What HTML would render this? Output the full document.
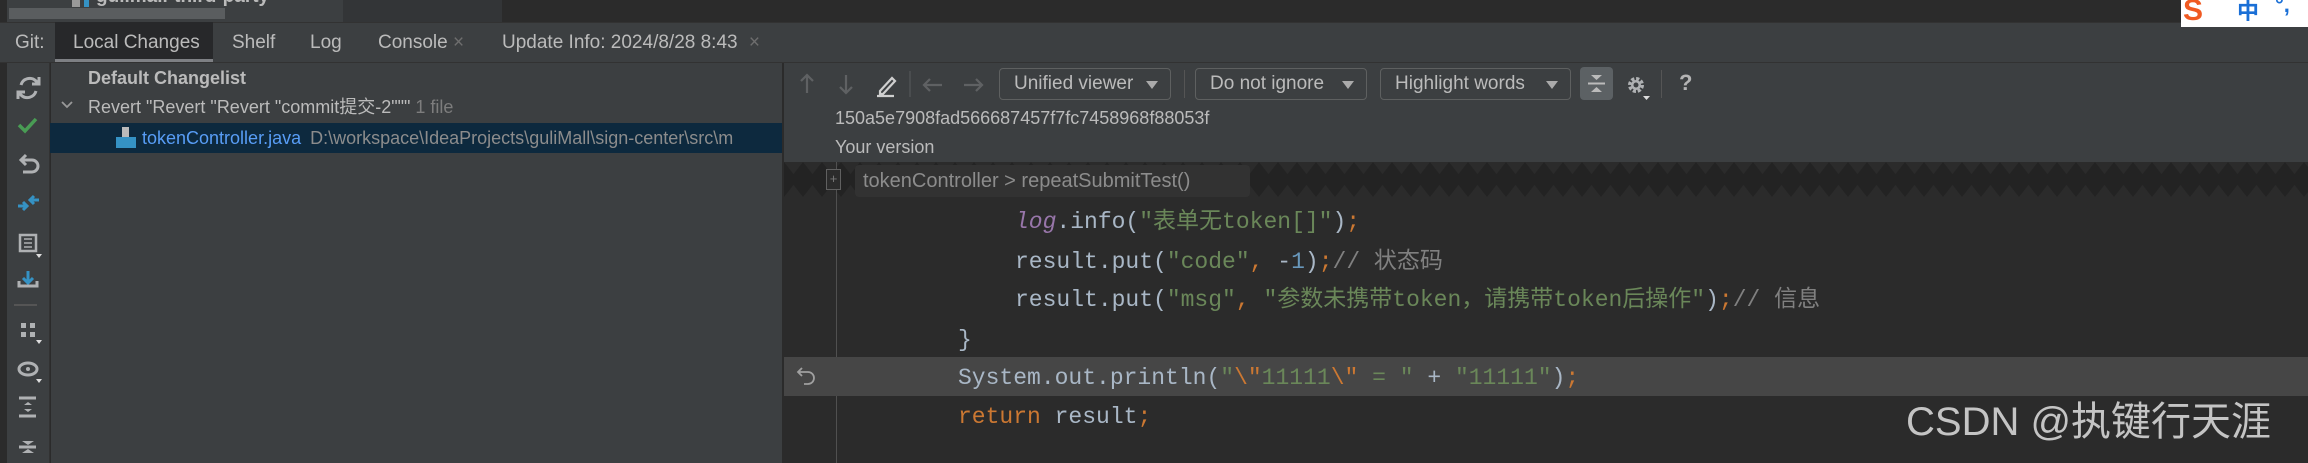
<!DOCTYPE html>
<html><head><meta charset="utf-8"><style>
*{margin:0;padding:0;box-sizing:border-box}
body{width:2308px;height:463px;overflow:hidden;background:#2b2b2b;position:relative;font-family:"Liberation Sans","Noto Sans CJK SC",sans-serif;color:#bbbbbb}
.a{position:absolute;white-space:nowrap}
.ui{font-size:19px;line-height:22px}
.code{font-family:"Liberation Mono","Noto Sans CJK SC",monospace;font-size:23px;line-height:28px;color:#a9b7c6}
.s{color:#6a8759}.k{color:#cc7832}.c{color:#808080}.n{color:#6897bb}.p{color:#9876aa;font-style:italic}
.dd{position:absolute;top:68px;height:32px;border:1px solid #5e6060;border-radius:4px;background:#3c3f41;font-size:19px;line-height:30px;padding-left:14px;color:#bbbbbb}
.dd i{position:absolute;right:12px;top:12px;width:0;height:0;border-left:6px solid transparent;border-right:6px solid transparent;border-top:8px solid #aaa}
</style></head><body>
<!-- top strip -->
<div class="a" style="left:0;top:0;width:7px;height:22px;background:#2b2b2b"></div>
<div class="a" style="left:7px;top:0;width:336px;height:22px;background:#3c3f41"></div>
<div class="a" style="left:9px;top:8px;width:216px;height:11px;background:#5a5d5f"></div>
<div class="a" style="left:72px;top:0;width:8px;height:7px;background:#999"></div>
<div class="a" style="left:84px;top:0;width:5px;height:7px;background:#3592c4"></div>
<div class="a" style="left:96px;top:-14px;font-size:19px;font-weight:bold;color:#bbb">gulimall-third-party</div>
<div class="a" style="left:343px;top:0;width:159px;height:22px;background:#333537"></div>
<!-- tab bar -->
<div class="a" style="left:0;top:22px;width:2308px;height:40px;background:#3c3f41;border-top:1px solid #323232"></div>
<div class="a" style="left:55px;top:22px;width:158px;height:40px;background:#27282a"></div>
<div class="a" style="left:55px;top:59px;width:158px;height:3px;background:#7e8084"></div>
<div class="a ui" style="left:15px;top:32px">Git:</div>
<div class="a ui" style="left:73px;top:32px">Local Changes</div>
<div class="a ui" style="left:232px;top:32px">Shelf</div>
<div class="a ui" style="left:310px;top:32px">Log</div>
<div class="a ui" style="left:378px;top:32px">Console <span style="color:#6e6e6e">×</span></div>
<div class="a ui" style="left:502px;top:32px">Update Info: 2024/8/28 8:43 <span style="color:#6e6e6e;margin-left:6px">×</span></div>
<div class="a" style="left:0;top:62px;width:2308px;height:1px;background:#323232"></div>
<!-- IME logo -->
<div class="a" style="left:2181px;top:0;width:127px;height:27px;background:#fff"></div>
<div class="a" style="left:2183px;top:-6px;font-size:30px;font-weight:bold;color:#f05a22;font-family:'Liberation Sans',sans-serif">S</div>
<div class="a" style="left:2237px;top:-6px;font-size:22px;font-weight:bold;color:#1a6fd6;font-family:'Noto Sans CJK SC',sans-serif">中</div>
<div class="a" style="left:2275px;top:-8px;font-size:22px;font-weight:bold;color:#1a6fd6">°,</div>
<!-- left toolbar -->
<div class="a" style="left:0;top:63px;width:7px;height:400px;background:#2b2b2b"></div>
<div class="a" style="left:7px;top:63px;width:43px;height:400px;background:#3c3f41;border-right:1px solid #323232"></div>
<svg class="a" style="left:7px;top:63px" width="43" height="400" fill="none" stroke-width="3">
<path d="M14 22a9 9 0 0 1 15-4l2 2M29 28a9 9 0 0 1-15 4l-2-2" stroke="#afb1b3"/><path d="M32 14v7h-7M11 36v-7h7" stroke="#afb1b3"/>
<path d="M12 62l6 6 11-12" stroke="#499c54" stroke-width="3.5"/>
<path d="M14 97h11a6 6 0 0 1 0 12h-9M19 92l-5 5 5 5" stroke="#afb1b3"/>
<path d="M11 143h9M16 139l4 4-4 4M32 137h-9M27 133l-4 4 4 4" stroke="#3592c4"/>
<rect x="13" y="172" width="16" height="16" stroke="#afb1b3" stroke-width="2.5"/><path d="M17 176h8M17 180h8M17 184h8" stroke="#afb1b3" stroke-width="1.5"/><path d="M29 191l3 4 3-4z" fill="#ddd" stroke="none"/>
<path d="M21 208v12M16 215l5 5 5-5" stroke="#3592c4"/><path d="M12 218v5h18v-5" stroke="#afb1b3"/>
<path d="M7 242h23" stroke="#555" stroke-width="2"/>
<rect x="14" y="260" width="5" height="5" fill="#afb1b3" stroke="none"/><rect x="23" y="260" width="5" height="5" fill="#afb1b3" stroke="none"/><rect x="14" y="269" width="5" height="5" fill="#afb1b3" stroke="none"/><rect x="23" y="269" width="5" height="5" fill="#afb1b3" stroke="none"/><path d="M29 277l3 4 3-4z" fill="#ddd" stroke="none"/>
<ellipse cx="21" cy="306" rx="9" ry="6" stroke="#afb1b3"/><circle cx="21" cy="306" r="2" fill="#afb1b3"/><path d="M29 316l3 4 3-4z" fill="#ddd" stroke="none"/>
<path d="M12 335h17M12 353h17" stroke="#afb1b3"/><path d="M17 342l4-3 4 3zM17 346l4 3 4-3z" fill="#afb1b3" stroke="none"/>
<path d="M15 378h12l-6 4zM15 390h12l-6-4z" fill="#afb1b3" stroke="none"/><path d="M12 384h17" stroke="#afb1b3"/>
</svg>
<!-- left panel -->
<div class="a" style="left:51px;top:63px;width:731px;height:400px;background:#3c3f41"></div>
<div class="a ui" style="left:88px;top:67px;font-weight:bold;font-size:18px">Default Changelist</div>
<svg class="a" style="left:60px;top:100px" width="14" height="10"><path d="M2 2l5 5 5-5" stroke="#999" stroke-width="1.8" fill="none"/></svg>
<div class="a ui" style="left:88px;top:96px;font-size:18px">Revert "Revert "Revert "commit提交-2""" <span style="color:#7d7d7d">1 file</span></div>
<div class="a" style="left:50px;top:123px;width:732px;height:30px;background:#0d293e"></div>
<div class="a" style="left:116px;top:127px;width:20px;height:21px"><div style="position:absolute;left:6px;top:0;width:7px;height:10px;background:#bbb"></div><div style="position:absolute;left:0;top:10px;width:20px;height:11px;background:#3592c4"></div></div>
<div class="a ui" style="left:142px;top:127px;font-size:18px;color:#589df6">tokenController.java <span style="color:#8c8c8c;margin-left:4px">D:\workspace\IdeaProjects\guliMall\sign-center\src\m</span></div>
<div class="a" style="left:782px;top:63px;width:2px;height:400px;background:#2b2b2b"></div>
<!-- diff toolbar -->
<div class="a" style="left:784px;top:63px;width:1524px;height:99px;background:#3c3f41"></div>
<svg class="a" style="left:784px;top:63px" width="200" height="44" fill="none" stroke-width="2.2">
<path d="M23 12v18M17 18l6-6 6 6" stroke="#5f6163"/>
<path d="M62 12v18M56 24l6 6 6-6" stroke="#5f6163"/>
<path d="M96 28l12-13 3 3-12 13h-3zM93 33h17" stroke="#cfcfcf"/>
<path d="M126 8v26" stroke="#4f5254" stroke-width="1.5"/>
<path d="M140 22h18M146 16l-6 6 6 6" stroke="#5f6163"/>
<path d="M180 22h18M192 16l6 6-6 6" stroke="#5f6163"/>
</svg>
<div class="dd" style="left:999px;width:172px">Unified viewer<i></i></div>
<div class="a" style="left:1184px;top:70px;width:1px;height:28px;background:#555"></div>
<div class="dd" style="left:1195px;width:172px">Do not ignore<i></i></div>
<div class="dd" style="left:1380px;width:191px">Highlight words<i></i></div>
<div class="a" style="left:1580px;top:67px;width:33px;height:33px;background:#5c6164;border-radius:4px"></div>
<svg class="a" style="left:1580px;top:67px" width="33" height="33"><path d="M11 8h11l-5.5 5zM11 25h11l-5.5-5z" fill="#bbb"/><path d="M8 16.5h17" stroke="#bbb" stroke-width="2"/></svg>
<svg class="a" style="left:1624px;top:72px" width="28" height="30"><circle cx="12" cy="13" r="6" fill="none" stroke="#afb1b3" stroke-width="4" stroke-dasharray="3 1.7"/><circle cx="12" cy="13" r="5" fill="#afb1b3"/><circle cx="12" cy="13" r="2.5" fill="#3c3f41"/><path d="M19 24h7l-3.5 4z" fill="#ddd"/></svg>
<div class="a" style="left:1661px;top:70px;width:1px;height:28px;background:#555"></div>
<div class="a" style="left:1679px;top:70px;font-size:22px;color:#b4b4b4;font-weight:bold">?</div>
<div class="a ui" style="left:835px;top:107px;font-size:18px">150a5e7908fad566687457f7fc7458968f88053f</div>
<div class="a ui" style="left:835px;top:136px;font-size:18px">Your version</div>
<!-- editor -->
<div class="a" style="left:784px;top:162px;width:1524px;height:301px;background:#2b2b2b"></div>
<svg class="a" style="left:784px;top:162px" width="1524" height="35"><defs><pattern id="z" width="19" height="35" patternUnits="userSpaceOnUse"><path d="M0 0h19v35H0z" fill="#232323"/><path d="M0 0L9.5 12L19 0z M0 35L9.5 23L19 35z" fill="#2b2b2b"/></pattern></defs><rect width="1524" height="35" fill="url(#z)"/></svg>
<div class="a" style="left:836px;top:162px;width:1px;height:301px;background:#505050"></div>
<div class="a" style="left:826px;top:169px;width:15px;height:21px;border:1px solid #606060;color:#777;font-size:13px;line-height:18px;text-align:center;background:#2b2b2b">+</div>
<div class="a" style="left:855px;top:165px;width:395px;height:32px;background:#323232;border-radius:4px"></div>
<div class="a ui" style="left:863px;top:170px;color:#8c8c8c;font-size:20px">tokenController &gt; repeatSubmitTest()</div>
<div class="a" style="left:784px;top:357px;width:1524px;height:39px;background:#464646"></div>
<svg class="a" style="left:792px;top:366px" width="28" height="24" fill="none" stroke="#a0a0a0" stroke-width="1.8"><path d="M6 6h10a6 6 0 0 1 0 12h-4M10 2L6 6l4 4"/></svg>
<div class="a code" style="left:1015px;top:208px"><span class="p">log</span>.info(<span class="s">"表单无token[]"</span>)<span class="k">;</span></div>
<div class="a code" style="left:1015px;top:248px">result.put(<span class="s">"code"</span><span class="k">,</span> -<span class="n">1</span>)<span class="k">;</span><span class="c">// 状态码</span></div>
<div class="a code" style="left:1015px;top:286px">result.put(<span class="s">"msg"</span><span class="k">,</span> <span class="s">"参数未携带token，请携带token后操作"</span>)<span class="k">;</span><span class="c">// 信息</span></div>
<div class="a code" style="left:958px;top:326px">}</div>
<div class="a code" style="left:958px;top:364px">System.out.println(<span class="s">"<span class="k">\"</span>11111<span class="k">\"</span> = "</span> + <span class="s">"11111"</span>)<span class="k">;</span></div>
<div class="a code" style="left:958px;top:403px"><span class="k">return</span> result<span class="k">;</span></div>
<div class="a" style="left:1906px;top:398px;font-size:40px;line-height:48px;color:#c4c4c4;font-family:'Liberation Sans','Noto Sans CJK SC',sans-serif">CSDN @执键行天涯</div>
</body></html>
